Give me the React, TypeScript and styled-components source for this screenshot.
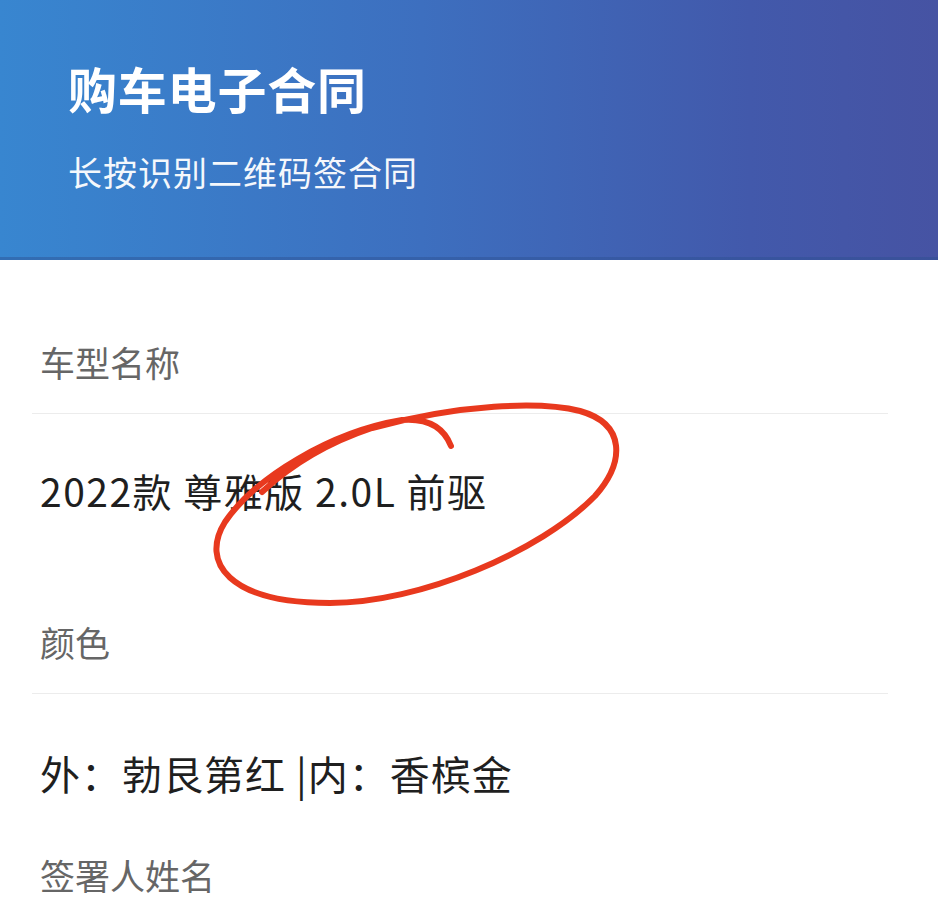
import React from 'react';
import styled, { createGlobalStyle } from 'styled-components';

const GlobalStyle = createGlobalStyle`
  html, body {
    margin: 0;
    padding: 0;
    background: #ffffff;
  }
  body {
    font-family: "Noto Sans CJK SC", "Noto Sans", sans-serif;
    -webkit-font-smoothing: antialiased;
  }
`;

const Page = styled.div`
  position: relative;
  width: 938px;
  height: 897px;
  overflow: hidden;
  background: #fff;
`;

const Header = styled.header`
  height: 260px;
  padding: 0 0 0 68px;
  box-sizing: border-box;
  display: flex;
  flex-direction: column;
  background: linear-gradient(90deg, #3886d0 0%, #3d6fbf 45%, #4259ab 80%, #4653a3 100%);
  border-bottom: 3px solid rgba(45, 80, 145, 0.45);
  color: #fff;
`;

const Title = styled.h1`
  margin: 60px 0 0;
  font-size: 49px;
  line-height: 56px;
  font-weight: 700;
  letter-spacing: 0.8px;
`;

const Subtitle = styled.p`
  margin: 34px 0 0;
  font-size: 34px;
  line-height: 44px;
  font-weight: 400;
  letter-spacing: 1px;
  opacity: 0.95;
`;

const Form = styled.section`
  padding: 0 50px 0 32px;
  display: flex;
  flex-direction: column;
`;

const Label = styled.div<{ $top: number; $divider?: boolean }>`
  margin-top: ${p => p.$top}px;
  padding: 0 0 ${p => (p.$divider ? 26 : 0)}px 8px;
  font-size: 35px;
  line-height: 50px;
  color: #666666;
  border-bottom: ${p => (p.$divider ? '1px solid #ececec' : 'none')};
`;

const Value = styled.div<{ $size: number; $spacing: number }>`
  margin-top: ${p => 54 - (p.$size > 39 ? 0 : 3)}px;
  padding-left: 8px;
  font-size: ${p => p.$size}px;
  letter-spacing: ${p => p.$spacing}px;
  line-height: 50px;
  color: #1f1f1f;
`;

const Marker = styled.svg`
  position: absolute;
  left: 0;
  top: 0;
  pointer-events: none;
`;

function RedCircle() {
  return (
    <Marker width="938" height="897" viewBox="0 0 938 897">
      <path
        d="M 451 446
           C 444 428, 428 418, 402 420
           C 330 432, 255 478, 225 522
           C 200 562, 228 603, 330 603
           C 420 603, 540 552, 595 496
           C 625 462, 626 424, 580 411
           C 540 401, 460 404, 372 428
           C 330 442, 292 464, 262 492"
        fill="none"
        stroke="#e8391e"
        strokeWidth="6"
        strokeLinecap="round"
        strokeLinejoin="round"
      />
    </Marker>
  );
}

const fields = [
  { label: '车型名称', value: '2022款 尊雅版 2.0L 前驱', top: 77, size: 39, spacing: 1.5 },
  { label: '颜色', value: '外：勃艮第红 |内：香槟金', top: 102, size: 40, spacing: 1 },
];

export default function App() {
  return (
    <Page>
      <GlobalStyle />
      <Header>
        <Title>购车电子合同</Title>
        <Subtitle>长按识别二维码签合同</Subtitle>
      </Header>
      <Form>
        {fields.map(f => (
          <React.Fragment key={f.label}>
            <Label $top={f.top} $divider>{f.label}</Label>
            <Value $size={f.size} $spacing={f.spacing}>{f.value}</Value>
          </React.Fragment>
        ))}
        <Label $top={52}>签署人姓名</Label>
      </Form>
      <RedCircle />
    </Page>
  );
}
